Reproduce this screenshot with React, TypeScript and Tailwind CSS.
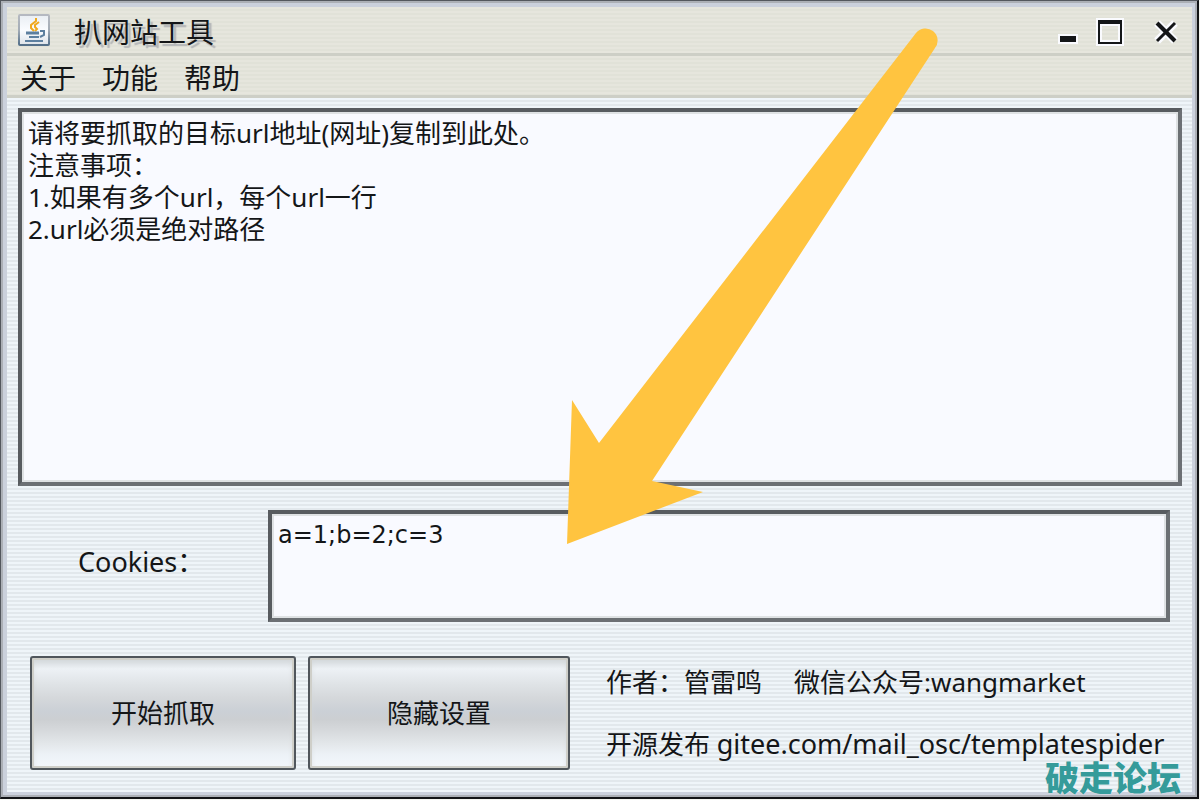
import React from 'react';

const DEFAULT_URLS = `请将要抓取的目标url地址(网址)复制到此处。
注意事项：
1.如果有多个url，每个url一行
2.url必须是绝对路径`;

const MENUS = ['关于', '功能', '帮助'];

const STRIPES = 'bg-[repeating-linear-gradient(to_bottom,#eff5f9_0px,#eff5f9_2px,#e2e8ec_2px,#e2e8ec_4px)]';
const BAR_STRIPES = 'bg-[repeating-linear-gradient(to_bottom,#e6e6dd_0px,#e6e6dd_2px,#e1e2d8_2px,#e1e2d8_4px)]';
const FIELD =
  'block resize-none rounded-none border-4 border-t-[#585c60] border-l-[#585c60] border-r-[#6c7074] border-b-[#6c7074] bg-[#f9faff] px-[6px] leading-8 text-[#141618] shadow-[inset_0_0_0_2px_#dfe2e4] outline-none';

const JavaIcon = () => (
  <svg className="h-8 w-8 shrink-0" viewBox="0 0 32 32" aria-hidden="true">
    <defs>
      <linearGradient id="java-frame" x1="0" y1="0" x2="0" y2="1">
        <stop offset="0" stopColor="#b5b9c1" />
        <stop offset="0.5" stopColor="#a3acb6" />
        <stop offset="1" stopColor="#536f89" />
      </linearGradient>
      <linearGradient id="java-face" x1="0" y1="0" x2="0" y2="1">
        <stop offset="0" stopColor="#e9eef3" />
        <stop offset="0.5" stopColor="#fafcff" />
        <stop offset="1" stopColor="#dde3e9" />
      </linearGradient>
    </defs>
    <rect x="1" y="1" width="30" height="30" rx="1" fill="url(#java-face)" stroke="url(#java-frame)" strokeWidth="2" />
    <g fill="none" stroke="#f0a91e" strokeWidth="2">
      <path d="M18 4v3l-5 4v3l3 3" />
      <path d="M21 8l-4 3v2l2 2-2 2" />
    </g>
    <g fill="none" stroke="#5c7f9f" strokeWidth="2">
      <path d="M8 19h13" strokeWidth="3" />
      <path d="M11 23h10" />
      <path d="M7 27h18" />
      <path d="M22 17h4v4l-4 2" />
    </g>
  </svg>
);

const WindowControls = () => (
  <div className="flex items-center gap-[18px] pt-1">
    <button type="button" aria-label="最小化" className="h-7 w-5">
      <svg className="h-7 w-5" viewBox="0 0 20 28">
        <rect x="0" y="16" width="20" height="10" fill="#fafbff" />
        <rect x="2" y="18" width="16" height="6" fill="#141618" />
      </svg>
    </button>
    <button type="button" aria-label="最大化" className="h-7 w-7">
      <svg className="h-7 w-7" viewBox="0 0 28 28">
        <path fillRule="evenodd" fill="#fafbff" d="M0 0h28v28H0zM6 8v14h16V8z" />
        <path fillRule="evenodd" fill="#141618" d="M2 2h24v24H2zM4 6v18h20V6z" />
      </svg>
    </button>
    <button type="button" aria-label="关闭" className="ml-2.5 h-7 w-7">
      <svg className="h-7 w-7" viewBox="0 0 28 28">
        <path d="M5 5L23 23M23 5L5 23" stroke="#fafbff" strokeWidth="8" />
        <path d="M5 5L23 23" stroke="#141618" strokeWidth="4" />
        <path d="M23 5L5 23" stroke="#141618" strokeWidth="3" />
      </svg>
    </button>
  </div>
);

const ActionButton = ({ label, className }: { label: string; className: string }) => (
  <button
    type="button"
    className={`h-[114px] shrink-0 rounded-[3px] border-2 border-[#50565c] bg-[linear-gradient(to_bottom,#dadfe2_0%,#edf1f5_10%,#dfe3e6_24%,#d5d8db_36%,#cbd0d6_48%,#cccfd2_56%,#d6d9dc_66%,#e3e7ea_78%,#edf2f7_88%,#f3f7fc_100%)] text-[26px] leading-8 shadow-[inset_0_0_0_2px_#cfcfc9,inset_0_4px_6px_#d2d6d9] ${className}`}
  >
    {label}
  </button>
);

const Arrow = () => (
  <svg
    className="pointer-events-none absolute top-[27px] left-[567px] h-[517px] w-[371px]"
    viewBox="567 27 371 517"
    aria-hidden="true"
  >
    <path
      d="M567 544L572 400L599 443L916 33A12 12 0 0 1 935 48L652 481L703 492Z"
      fill="#ffc440"
    />
  </svg>
);

export default function App() {
  const [urls, setUrls] = React.useState(DEFAULT_URLS);
  const [cookies, setCookies] = React.useState('a=1;b=2;c=3');

  return (
    <div className="relative min-h-screen bg-[#f4f5f0] pr-px pb-px font-['Noto_Sans','Noto_Sans_CJK_SC',sans-serif] text-[#141618]">
      <div className="flex min-h-[calc(100vh-1px)] flex-col border-t border-r-2 border-b-2 border-l border-t-[#54585e] border-r-[#111315] border-b-[#111315] border-l-[#54585e]">
        <div className="flex flex-1 flex-col border-2 border-[#acb0b6]">
          <div className="flex flex-1 flex-col border-4 border-r-[3px] border-b-[3px] border-[#cbd1dc]">
            <header className={`flex h-[49px] items-center border-b-[3px] border-[#cdcfc6] pr-3 pl-[11px] ${BAR_STRIPES}`}>
              <JavaIcon />
              <h1 className="ml-6 flex-1 pt-1 text-[28px] leading-8 [text-shadow:3px_3px_1px_#b4b6b8]">扒网站工具</h1>
              <WindowControls />
            </header>

            <nav className={`flex h-[42px] items-center gap-[26px] border-b-[3px] border-[#cdcfc6] pt-1 pl-[13px] ${BAR_STRIPES}`}>
              {MENUS.map((menu) => (
                <button key={menu} type="button" className="text-[28px] leading-8">
                  {menu}
                </button>
              ))}
            </nav>

            <main className={`flex flex-1 flex-col pb-[22px] ${STRIPES}`}>
              <textarea
                aria-label="目标url地址"
                className={`mt-[10px] mr-[10px] ml-[11px] min-h-40 flex-1 pt-[5px] text-[26px] ${FIELD}`}
                value={urls}
                onChange={(e) => setUrls(e.target.value)}
                spellCheck={false}
              />

              <div className="mt-6 mr-[22px] ml-[71px] flex items-center">
                <label htmlFor="cookies" className="w-[190px] shrink-0 pb-2 text-[27px] leading-8">
                  Cookies：
                </label>
                <textarea
                  id="cookies"
                  className={`h-28 min-w-0 flex-1 pt-[5px] font-['DejaVu_Sans','Noto_Sans_CJK_SC',sans-serif] text-[24px] ${FIELD}`}
                  value={cookies}
                  onChange={(e) => setCookies(e.target.value)}
                  spellCheck={false}
                />
              </div>

              <div className="mt-[34px] ml-[23px] flex items-center">
                <ActionButton label="开始抓取" className="w-[266px]" />
                <ActionButton label="隐藏设置" className="ml-3 w-[262px]" />
                <div className="ml-9 flex flex-col gap-[30px] text-[26px] leading-8 whitespace-nowrap">
                  <p>
                    作者：管雷鸣<span className="ml-8">微信公众号:wangmarket</span>
                  </p>
                  <p>
                    开源发布 <span className="text-[27px]">gitee.com/mail_osc/templatespider</span>
                  </p>
                </div>
              </div>
            </main>
          </div>
        </div>
      </div>

      <Arrow />
      <div className="absolute right-[19px] bottom-1 text-[34px] leading-9 font-black text-[#359b9a] [text-shadow:0_0_1px_#f4f8fa]">
        破走论坛
      </div>
    </div>
  );
}
